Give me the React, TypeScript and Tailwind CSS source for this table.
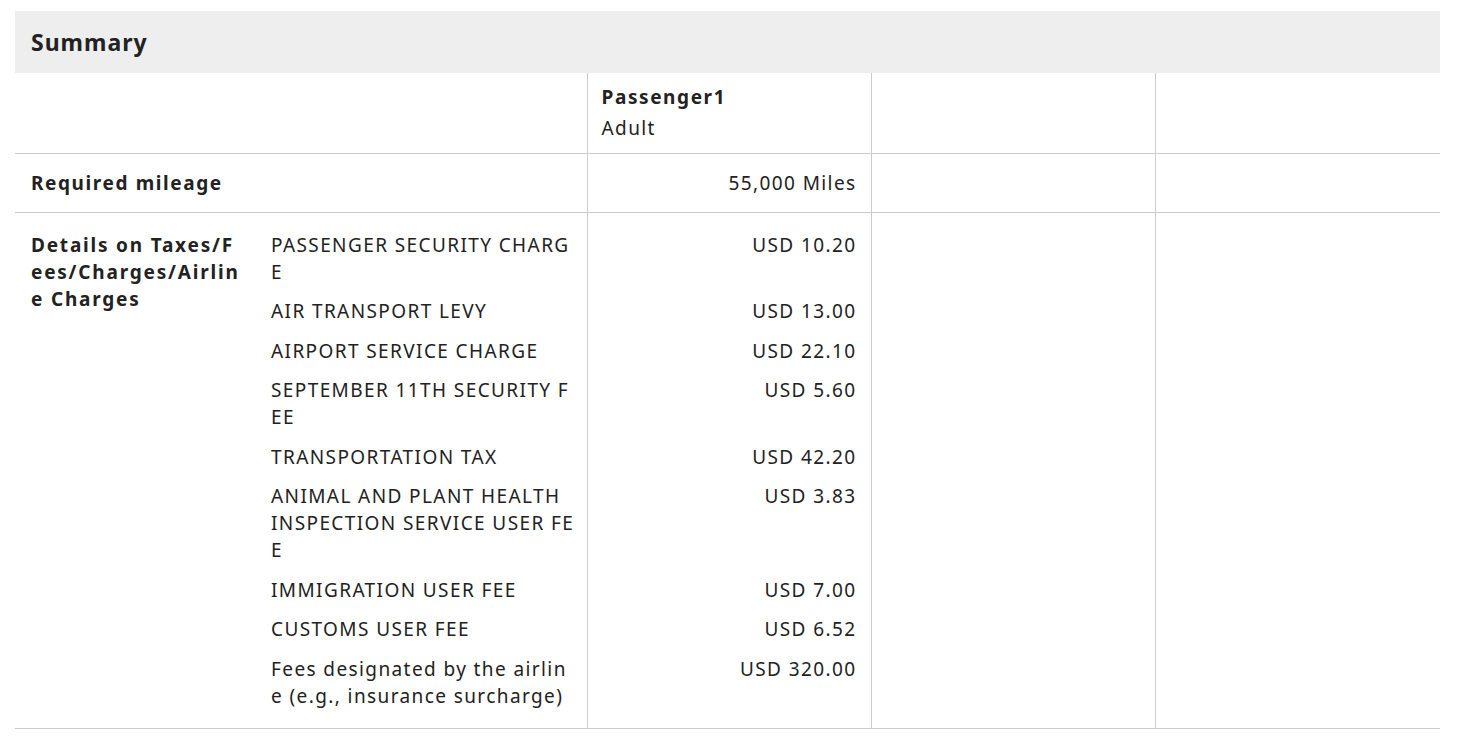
import React from "react";

type Fee = { label: string[]; amount: string };

const fees: Fee[] = [
  { label: ["PASSENGER SECURITY CHARG", "E"], amount: "USD 10.20" },
  { label: ["AIR TRANSPORT LEVY"], amount: "USD 13.00" },
  { label: ["AIRPORT SERVICE CHARGE"], amount: "USD 22.10" },
  { label: ["SEPTEMBER 11TH SECURITY F", "EE"], amount: "USD 5.60" },
  { label: ["TRANSPORTATION TAX"], amount: "USD 42.20" },
  { label: ["ANIMAL AND PLANT HEALTH", "INSPECTION SERVICE USER FE", "E"], amount: "USD 3.83" },
  { label: ["IMMIGRATION USER FEE"], amount: "USD 7.00" },
  { label: ["CUSTOMS USER FEE"], amount: "USD 6.52" },
  { label: ["Fees designated by the airlin", "e (e.g., insurance surcharge)"], amount: "USD 320.00" },
];

function Lines({ lines }: { lines: string[] }) {
  return (
    <>
      {lines.map((l, i) => (
        <span key={i} className="block whitespace-nowrap">
          {l}
        </span>
      ))}
    </>
  );
}

export default function App() {
  const last = fees.length - 1;

  // vertical padding of each fee row, first and last get the cell padding too
  const pad = (i: number) =>
    i === 0 ? "pt-[18.5px] pb-[6.25px]" : i === last ? "pt-[6.25px] pb-[18px]" : "py-[6.25px]";

  return (
    <div
      className="min-h-screen bg-white pt-[11px] px-[15px] text-[19px] leading-[27px] tracking-[1.4px] text-[#222]"
      style={{ fontFamily: '"Noto Sans", "Open Sans", sans-serif' }}
    >
      <div className="w-[1425px]">
        <div className="h-[62px] bg-[#eeeeee] px-4 flex items-center">
          <h2 className="text-[23px] font-bold tracking-[1px] text-[#222]">Summary</h2>
        </div>
        <table className="w-full table-fixed border-collapse">
          <colgroup>
            <col className="w-[240px]" />
            <col className="w-[332px]" />
            <col className="w-[284px]" />
            <col className="w-[284px]" />
            <col className="w-[285px]" />
          </colgroup>
          <tbody>
            <tr className="border-b border-[#cccccc]">
              <td colSpan={2} />
              <td className="border-l border-[#cccccc] pl-[14px] pr-4 pt-[11px] pb-[11px] align-top">
                <div className="font-bold tracking-[1.6px]">Passenger1</div>
                <div className="mt-1">Adult</div>
              </td>
              <td className="border-l border-[#cccccc]" />
              <td className="border-l border-[#cccccc]" />
            </tr>
            <tr className="border-b border-[#cccccc]">
              <td colSpan={2} className="px-4 py-[15.5px] font-bold tracking-[1.6px]">
                Required mileage
              </td>
              <td className="border-l border-[#cccccc] pl-[15px] pr-[14px] py-[15.5px] text-right">55,000 Miles</td>
              <td className="border-l border-[#cccccc]" />
              <td className="border-l border-[#cccccc]" />
            </tr>
          </tbody>
          <tbody className="border-b border-[#cccccc]">
            {fees.map((f, i) => (
              <tr key={i}>
                {i === 0 && (
                  <td rowSpan={fees.length} className="pl-4 pt-[18.5px] align-top font-bold tracking-[1.8px]">
                    <Lines lines={["Details on Taxes/F", "ees/Charges/Airlin", "e Charges"]} />
                  </td>
                )}
                <td className={`pl-4 pr-1 align-top ${pad(i)}`}>
                  <Lines lines={f.label} />
                </td>
                <td className={`border-l border-[#cccccc] pl-[15px] pr-[14px] text-right align-top ${pad(i)}`}>
                  {f.amount}
                </td>
                {i === 0 && (
                  <>
                    <td rowSpan={fees.length} className="border-l border-[#cccccc]" />
                    <td rowSpan={fees.length} className="border-l border-[#cccccc]" />
                  </>
                )}
              </tr>
            ))}
          </tbody>
        </table>
      </div>
    </div>
  );
}
